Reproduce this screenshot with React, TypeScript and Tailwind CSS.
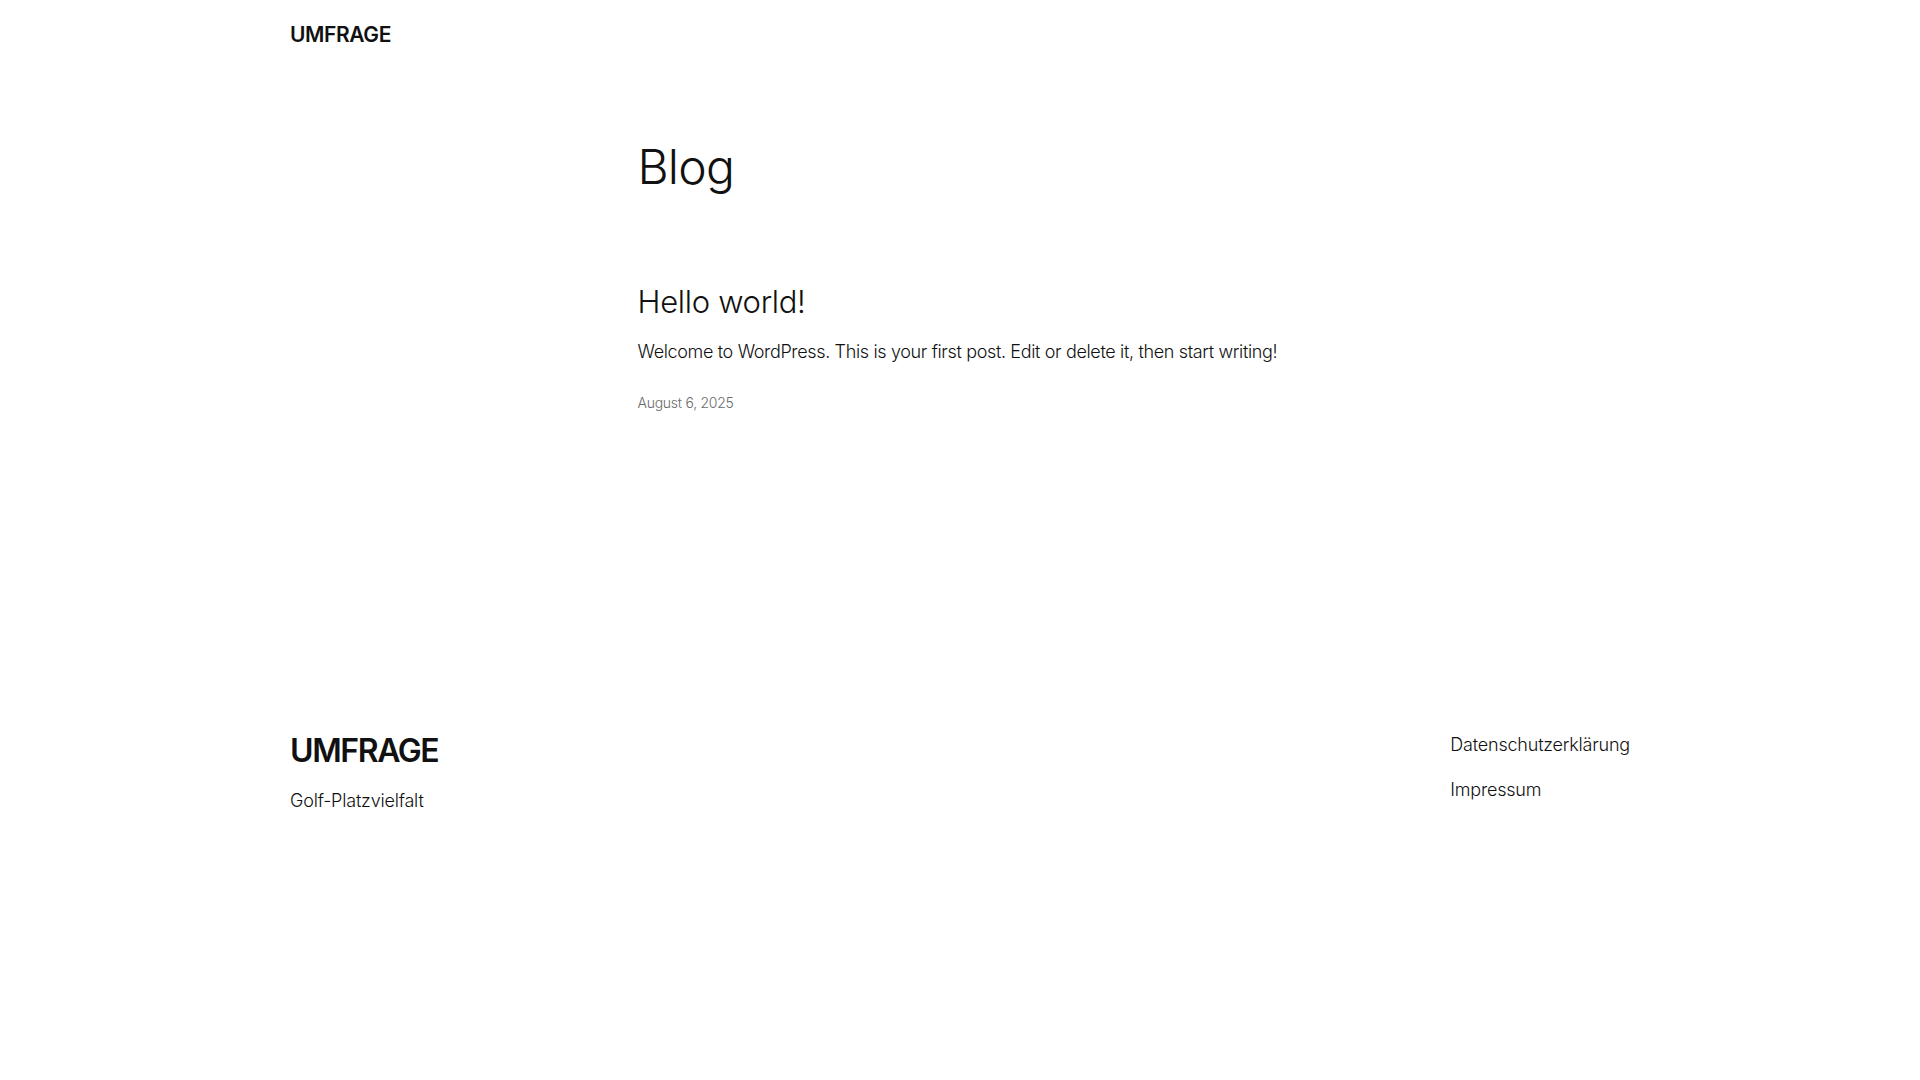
const font = { fontFamily: "Inter, 'Noto Sans', sans-serif" };

export default function App() {
  return (
    <div className="min-h-screen bg-white text-[#111111]" style={font}>
      <header className="mx-auto w-[1340px] pt-[20px] pb-[20px]">
        <a href="#" className="text-[21px] font-semibold leading-[30px] tracking-[-0.4px]">
          UMFRAGE
        </a>
      </header>

      <main className="mx-auto w-[645px] pt-[68px]">
        <h1 className="text-[48px] font-light leading-[1.2] tracking-[-0.8px]">Blog</h1>

        <article className="mt-[87px]">
          <h2 className="text-[31px] font-light leading-[1.2] tracking-[-0.3px]">
            <a href="#">Hello world!</a>
          </h2>
          <p className="mt-[18px] text-[18px] font-light leading-[1.5] tracking-[-0.35px]">
            Welcome to WordPress. This is your first post. Edit or delete it, then start writing!
          </p>
          <div className="mt-[28px] text-[14px] font-light leading-[1.4] tracking-[-0.25px] text-[#6b6b6b]">
            August 6, 2025
          </div>
        </article>
      </main>

      <footer className="mx-auto mt-[320px] flex w-[1340px] justify-between">
        <div>
          <div className="text-[32px] font-semibold leading-[1.2] tracking-[-1.4px]">UMFRAGE</div>
          <p className="mt-[16px] text-[18px] font-light leading-[1.5] tracking-[-0.2px]">Golf-Platzvielfalt</p>
        </div>
        <nav className="-mt-[1px] flex flex-col gap-[18px] text-[18px] font-light leading-[1.5] tracking-[-0.2px]">
          <a href="#">Datenschutzerklärung</a>
          <a href="#">Impressum</a>
        </nav>
      </footer>
    </div>
  );
}
